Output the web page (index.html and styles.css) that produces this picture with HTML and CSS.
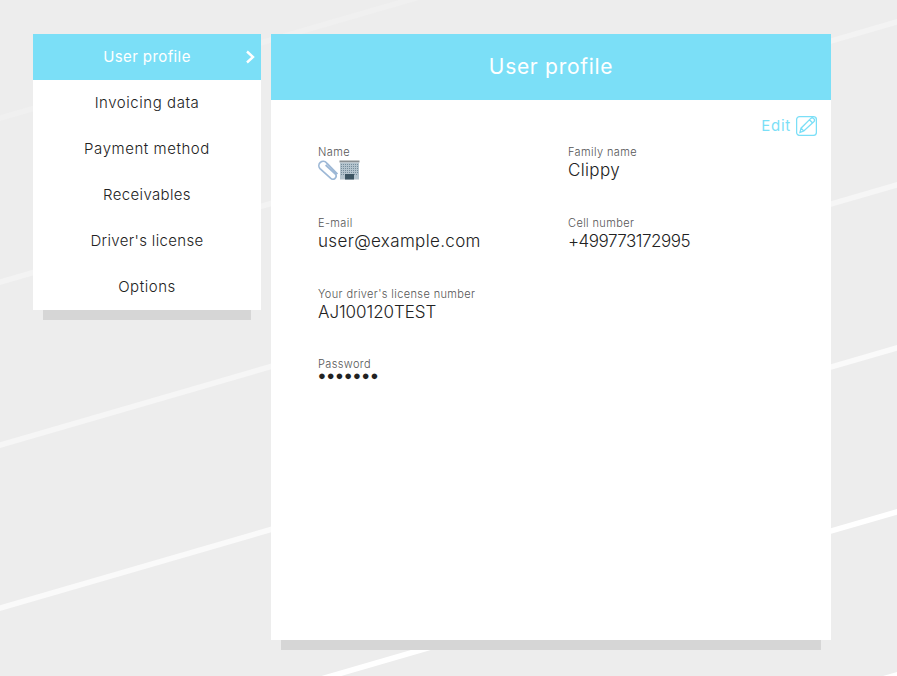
FILE: index.html
```html
<!DOCTYPE html>
<html lang="en">
<head>
<meta charset="utf-8">
<title>User profile</title>
<link rel="stylesheet" href="styles.css">
</head>
<body>
<svg class="backdrop" viewBox="0 0 897 676" aria-hidden="true">
  <line class="l1" x1="-20" y1="124" x2="440" y2="-9"/>
  <line class="l2" x1="-20" y1="288" x2="917" y2="16"/>
  <line class="l3" x1="-20" y1="451" x2="917" y2="179"/>
  <line class="l4" x1="-20" y1="614" x2="917" y2="342"/>
  <line class="l5" x1="-20" y1="778" x2="917" y2="506"/>
  <line class="l5" x1="-20" y1="941" x2="917" y2="669"/>
</svg>
<div class="page">
  <nav class="side">
    <a class="item active">User profile
      <svg class="chev" viewBox="0 0 10 14"><path d="M2 1.5 L8 7 L2 12.5"/></svg>
    </a>
    <a class="item">Invoicing data</a>
    <a class="item">Payment method</a>
    <a class="item tight">Receivables</a>
    <a class="item tight">Driver's license</a>
    <a class="item">Options</a>
  </nav>
  <main class="card">
    <h1 class="head">User profile</h1>
    <div class="body">
      <div class="edit">Edit
        <svg class="pen" viewBox="0 0 21 21">
          <rect x="0.6" y="1.6" width="19.8" height="18.8" rx="3"/>
          <path d="M4 17.4 L5 13.2 L14.6 3.6 A1.8 1.8 0 0 1 17.8 6.8 L7.8 16 Z M5 13.2 L7.8 16 M13.4 4.8 L16.4 7.8"/>
        </svg>
      </div>
      <div class="grid">
        <div class="field"><div class="label">Name</div>
          <div class="value">
            <svg class="emoji" viewBox="0 0 42 20">
              <path class="clip" d="M19.5 14 L8.5 2.8 A4.2 4.2 0 0 0 2 8.6 L12.8 18.4 A3.2 3.2 0 0 0 17.4 14 L7.6 5"/>
              <rect class="roof" x="21.5" y="0.5" width="20" height="2"/>
              <rect class="tower" x="22" y="2.5" width="19" height="17"/>
              <path class="win" d="M23 4.5H40M23 6.5H40M23 8.5H40M23 10.5H40M23 12.5H40M23 14.5H27M36 14.5H40"/>
              <rect class="door" x="27" y="14" width="9" height="5.5"/>
            </svg>
          </div>
        </div>
        <div class="field"><div class="label">Family name</div><div class="value">Clippy</div></div>
        <div class="field"><div class="label">E-mail</div><div class="value">user@example.com</div></div>
        <div class="field"><div class="label">Cell number</div><div class="value num">+499773172995</div></div>
        <div class="field"><div class="label">Your driver's license number</div><div class="value code">AJ100120TEST</div></div>
        <div class="field"></div>
        <div class="field"><div class="label">Password</div><div class="value dots">●●●●●●●</div></div>
      </div>
    </div>
  </main>
</div>
</body>
</html>
```
FILE: styles.css
```css
* { box-sizing: border-box; }
html, body { margin: 0; height: 100%; }
body {
  background: #ededed;
  font-family: "Inter", "Liberation Sans", sans-serif;
  color: #222;
  overflow: hidden;
}
.backdrop { position: absolute; left: 0; top: 0; width: 897px; height: 676px; }
.backdrop line { stroke-width: 5.5; fill: none; }
.l1 { stroke: #f0f0f0; }
.l2 { stroke: #f3f3f3; }
.l3 { stroke: #f6f6f6; }
.l4 { stroke: #fafafa; }
.l5 { stroke: #ffffff; }

.page {
  position: relative;
  display: flex;
  align-items: flex-start;
  gap: 10px;
  padding: 34px 0 0 33px;
}
.side {
  width: 228px;
  background: #fff;
  box-shadow: 0 20px 0 -10px #d6d6d6;
  display: flex;
  flex-direction: column;
}
.item {
  position: relative;
  height: 46px;
  padding-bottom: 2px;
  display: flex;
  align-items: center;
  justify-content: center;
  font-size: 15px;
  font-weight: 300;
  letter-spacing: 0.55px;
  color: #222;
}
.item.tight { letter-spacing: 0.35px; }
.item.active { background: #7bdff7; color: #fff; font-weight: 400; letter-spacing: 0.4px; }
.chev {
  position: absolute;
  right: 6px;
  top: 16px;
  width: 10px;
  height: 14px;
  fill: none;
  stroke: #fff;
  stroke-width: 2.4;
}
.card {
  width: 560px;
  height: 606px;
  background: #fff;
  box-shadow: 0 20px 0 -10px #d6d6d6;
}
.head {
  margin: 0;
  height: 66px;
  padding-bottom: 2px;
  background: #7bdff7;
  color: #fff;
  font-size: 21px;
  font-weight: 400;
  letter-spacing: 0.7px;
  display: flex;
  align-items: center;
  justify-content: center;
}
.body { padding: 15px 14px 0 47px; }
.edit {
  display: flex;
  justify-content: flex-end;
  align-items: center;
  gap: 5px;
  height: 21px;
  color: #7bdff7;
  font-size: 15px;
  font-weight: 400;
  letter-spacing: 0.75px;
}
.pen {
  width: 21px;
  height: 21px;
  fill: none;
  stroke: #7bdff7;
  stroke-width: 1.3;
}
.grid {
  display: grid;
  grid-template-columns: 250px 1fr;
  grid-template-rows: 71px 71px 70px 71px;
  margin-top: 9px;
}
.label {
  font-size: 11px;
  line-height: 15px;
  font-weight: 300;
  letter-spacing: 0.38px;
  color: #555;
}
.value {
  font-size: 17px;
  line-height: 20px;
  font-weight: 300;
  letter-spacing: 0.35px;
  color: #222;
}
.value.num { letter-spacing: -0.5px; }
.value.code { letter-spacing: -0.05px; }
.emoji { display: block; width: 42px; height: 20px; }
.clip { fill: none; stroke: #9db8d6; stroke-width: 1.7; }
.roof { fill: #8a8f92; }
.tower { fill: #b4c4ce; }
.win { stroke: #6f8796; stroke-width: 0.9; stroke-dasharray: 1 1; fill: none; }
.door { fill: #3c5563; }
.value.dots {
  font-family: "DejaVu Sans", sans-serif;
  font-size: 13px;
  line-height: 7px;
  letter-spacing: 0.9px;
  color: #222;
}
```
